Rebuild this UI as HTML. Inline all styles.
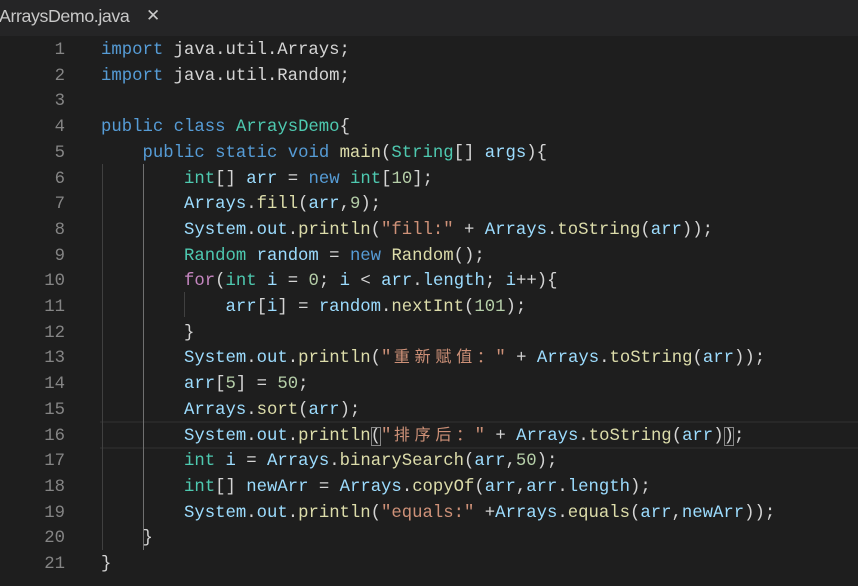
<!DOCTYPE html>
<html><head><meta charset="utf-8"><style>
body{margin:0;width:858px;height:584px;background:#1e1e1e;overflow:hidden;position:relative;font-family:"Liberation Mono","Noto Sans CJK SC",monospace;}
.tabbar{position:absolute;left:0;top:0;width:858px;height:36px;background:#252526;}
.tab{position:absolute;left:-1px;top:6px;font-family:"Liberation Sans",sans-serif;font-size:17.8px;color:#c8c8c8;letter-spacing:-0.4px}
.x{position:absolute;left:146px;top:6px;font-family:"Liberation Sans",sans-serif;font-size:17px;color:#c8c8c8}
.wrap{position:absolute;left:0;top:2px;width:858px;height:584px}
.ln{position:absolute;left:0;width:65px;text-align:right;color:#858585;font-size:17.3px;line-height:25.7px;height:25.7px}
.cl{position:absolute;left:101px;font-size:17.3px;line-height:25.7px;height:25.7px;white-space:pre;color:#d4d4d4}
.k{color:#569cd6}.t{color:#4ec9b0}.m{color:#dcdcaa}.v{color:#9cdcfe}.s{color:#ce9178}.n{color:#b5cea8}.c{color:#c586c0}
.cj{display:inline-block;width:20.8px;height:25.7px;line-height:25.7px;vertical-align:top;position:relative;top:-3px;text-align:center;font-family:"Noto Sans CJK SC",sans-serif;font-size:16px}
.g{position:absolute;width:1px;background:#404040}
.cur{position:absolute;left:100px;right:0;top:421px;height:24px;border-top:2px solid #282828;border-bottom:2px solid #282828}
.bm{outline:1px solid #888;outline-offset:-1px}
</style></head><body>
<div class="tabbar"><span class="tab">ArraysDemo.java</span><span class="x">✕</span></div>
<div class="cur"></div>
<div class="g" style="left:102px;top:164px;height:386px"></div>
<div class="g" style="left:143px;top:164px;height:386px;background:#707070"></div>
<div class="g" style="left:184px;top:292px;height:25px"></div>
<div class="wrap">
<div class="ln" style="top:36px">1</div>
<div class="ln" style="top:61.7px">2</div>
<div class="ln" style="top:87.4px">3</div>
<div class="ln" style="top:113.1px">4</div>
<div class="ln" style="top:138.8px">5</div>
<div class="ln" style="top:164.5px">6</div>
<div class="ln" style="top:190.2px">7</div>
<div class="ln" style="top:215.9px">8</div>
<div class="ln" style="top:241.6px">9</div>
<div class="ln" style="top:267.3px">10</div>
<div class="ln" style="top:293px">11</div>
<div class="ln" style="top:318.7px">12</div>
<div class="ln" style="top:344.4px">13</div>
<div class="ln" style="top:370.1px">14</div>
<div class="ln" style="top:395.8px">15</div>
<div class="ln" style="top:421.5px">16</div>
<div class="ln" style="top:447.2px">17</div>
<div class="ln" style="top:472.9px">18</div>
<div class="ln" style="top:498.6px">19</div>
<div class="ln" style="top:524.3px">20</div>
<div class="ln" style="top:550px">21</div>

<div class="cl" style="top:36px"><span class="k">import</span> java.util.Arrays;</div>
<div class="cl" style="top:61.7px"><span class="k">import</span> java.util.Random;</div>
<div class="cl" style="top:113.1px"><span class="k">public</span> <span class="k">class</span> <span class="t">ArraysDemo</span>{</div>
<div class="cl" style="top:138.8px">    <span class="k">public</span> <span class="k">static</span> <span class="k">void</span> <span class="m">main</span>(<span class="t">String</span>[] <span class="v">args</span>){</div>
<div class="cl" style="top:164.5px">        <span class="t">int</span>[] <span class="v">arr</span> = <span class="k">new</span> <span class="t">int</span>[<span class="n">10</span>];</div>
<div class="cl" style="top:190.2px">        <span class="v">Arrays</span>.<span class="m">fill</span>(<span class="v">arr</span>,<span class="n">9</span>);</div>
<div class="cl" style="top:215.9px">        <span class="v">System</span>.<span class="v">out</span>.<span class="m">println</span>(<span class="s">"fill:"</span> + <span class="v">Arrays</span>.<span class="m">toString</span>(<span class="v">arr</span>));</div>
<div class="cl" style="top:241.6px">        <span class="t">Random</span> <span class="v">random</span> = <span class="k">new</span> <span class="m">Random</span>();</div>
<div class="cl" style="top:267.3px">        <span class="c">for</span>(<span class="t">int</span> <span class="v">i</span> = <span class="n">0</span>; <span class="v">i</span> &lt; <span class="v">arr</span>.<span class="v">length</span>; <span class="v">i</span>++){</div>
<div class="cl" style="top:293px">            <span class="v">arr</span>[<span class="v">i</span>] = <span class="v">random</span>.<span class="m">nextInt</span>(<span class="n">101</span>);</div>
<div class="cl" style="top:318.7px">        }</div>
<div class="cl" style="top:344.4px">        <span class="v">System</span>.<span class="v">out</span>.<span class="m">println</span>(<span class="s">"<span class="cj">重</span><span class="cj">新</span><span class="cj">赋</span><span class="cj">值</span><span class="cj">：</span>"</span> + <span class="v">Arrays</span>.<span class="m">toString</span>(<span class="v">arr</span>));</div>
<div class="cl" style="top:370.1px">        <span class="v">arr</span>[<span class="n">5</span>] = <span class="n">50</span>;</div>
<div class="cl" style="top:395.8px">        <span class="v">Arrays</span>.<span class="m">sort</span>(<span class="v">arr</span>);</div>
<div class="cl" style="top:421.5px">        <span class="v">System</span>.<span class="v">out</span>.<span class="m">println</span><span class="bm">(</span><span class="s">"<span class="cj">排</span><span class="cj">序</span><span class="cj">后</span><span class="cj">：</span>"</span> + <span class="v">Arrays</span>.<span class="m">toString</span>(<span class="v">arr</span>)<span class="bm">)</span>;</div>
<div class="cl" style="top:447.2px">        <span class="t">int</span> <span class="v">i</span> = <span class="v">Arrays</span>.<span class="m">binarySearch</span>(<span class="v">arr</span>,<span class="n">50</span>);</div>
<div class="cl" style="top:472.9px">        <span class="t">int</span>[] <span class="v">newArr</span> = <span class="v">Arrays</span>.<span class="m">copyOf</span>(<span class="v">arr</span>,<span class="v">arr</span>.<span class="v">length</span>);</div>
<div class="cl" style="top:498.6px">        <span class="v">System</span>.<span class="v">out</span>.<span class="m">println</span>(<span class="s">"equals:"</span> +<span class="v">Arrays</span>.<span class="m">equals</span>(<span class="v">arr</span>,<span class="v">newArr</span>));</div>
<div class="cl" style="top:524.3px">    }</div>
<div class="cl" style="top:550px">}</div>
</div>
</body></html>
